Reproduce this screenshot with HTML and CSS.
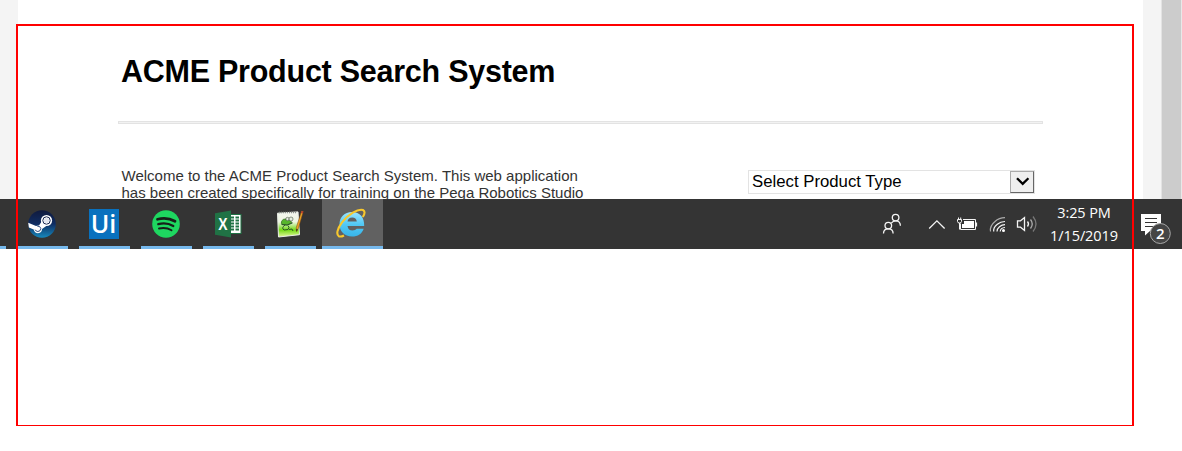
FILE: index.html
```html
<!DOCTYPE html>
<html lang="en">
<head>
<meta charset="utf-8">
<title>ACME Product Search System</title>
<link rel="stylesheet" href="styles.css">
</head>
<body>
<div class="browser">
  <div class="gutter"></div>
  <main class="page">
    <h1 class="title">ACME Product Search System</h1>
    <div class="rule"></div>
    <div class="row">
      <p class="intro">Welcome to the ACME Product Search System. This web application<br>has been created specifically for training on the Pega Robotics Studio</p>
      <div class="select">
        <span class="select-text">Select Product Type</span>
        <span class="select-button"><svg width="24" height="22" viewBox="0 0 24 22"><path d="M7 7.300 12.700 12.900 18.400 7.300" fill="none" stroke="#000" stroke-width="2.300"/></svg></span>
      </div>
    </div>
  </main>
  <div class="gutter"></div>
  <div class="scrollbar"></div>
</div>
<div class="taskbar">
  <div class="apps">
    <div class="sliver"></div>
    <div class="app">
      <svg width="28" height="28" viewBox="0 0 28 28">
        <defs><linearGradient id="steam" x1="0" y1="0" x2="0" y2="1"><stop offset="0" stop-color="#101a3d"/><stop offset=".5" stop-color="#102d62"/><stop offset="1" stop-color="#1689bd"/></linearGradient></defs>
        <circle cx="14" cy="14" r="13.800" fill="url(#steam)"/>
        <path d="M.2 12.800 8 16q1.500-.8 3-.5L14 11l5 4.500-5 3.500q0 4-4 4.200-3.500-.2-4.300-3.700L.9 17.500Z" fill="#fff"/>
        <circle cx="18.500" cy="10.500" r="5.600" fill="#fff"/><circle cx="18.500" cy="10.500" r="3.700" fill="none" stroke="#17264f" stroke-width="1"/><circle cx="18.500" cy="10.500" r="2.700" fill="#e4e7ef"/>
        <path d="M9.300 16.200q3-.4 3.500 2.300-.2 3-3 3-1.800 0-2.600-1.800" fill="none" stroke="#1b3970" stroke-width=".9"/>
      </svg>
    </div>
    <div class="app"><div class="uipath">Ui</div></div>
    <div class="app">
      <svg width="28" height="28" viewBox="0 0 28 28"><circle cx="14" cy="14" r="13.800" fill="#1ed760"/><g fill="none" stroke="#171f19" stroke-linecap="round"><path d="M5.500 9.300q9.500-2.500 17.500 2" stroke-width="2.700"/><path d="M6.300 14.200q8-2.200 15 1.800" stroke-width="2.300"/><path d="M7 18.500q7-1.600 12.500 1.700" stroke-width="1.900"/></g></svg>
    </div>
    <div class="app">
      <svg width="28" height="28" viewBox="0 0 28 28"><path d="M15 4h12.500v20H15Z" fill="#207245"/><path d="M15 5h11.500v18H15Z" fill="#fff"/><path d="M17 7.500h3M17 10.500h3M17 13.500h3M17 16.500h3M17 19.500h3M21.500 7.500H25M21.500 10.500H25M21.500 13.500H25M21.500 16.500H25M21.500 19.500H25" stroke="#207245" stroke-width="2.200"/><path d="M1 3.200 17 .5v27L1 24.800Z" fill="#207245"/><text x="4.200" y="19.500" class="xl" textLength="9.300" lengthAdjust="spacingAndGlyphs">X</text></svg>
    </div>
    <div class="app">
      <svg width="28" height="28" viewBox="0 0 28 28">
        <defs><linearGradient id="leaf" x1="0" y1="0" x2="0" y2="1"><stop offset="0" stop-color="#f4f7f0"/><stop offset=".4" stop-color="#eef6e2"/><stop offset=".72" stop-color="#72d914"/><stop offset="1" stop-color="#e5f99e"/></linearGradient></defs>
        <path d="m1.500 3.200 20.500-1.300 1.500 22.800-21 2.300Z" fill="url(#leaf)" stroke="#e9eee6"/>
        <path d="M3 2.500h18" stroke="#8b918b" stroke-width="1.500" stroke-dasharray="1 1"/>
        <path d="M5.500 11.500q1-3 4.500-2.500 2.500 0 4 1.500l2 2q-4 3.500-9 2-2.500-.5-1.500-3Z" fill="#57b52c" stroke="#3b7529" stroke-width=".8"/>
        <circle cx="11.500" cy="9" r="1.700" fill="#e5eedf" stroke="#465244" stroke-width=".6"/><circle cx="15" cy="9" r="2" fill="#e5eedf" stroke="#465244" stroke-width=".6"/>
        <path d="M5.500 14.500q5 2 11-1.500M9 15q-4 3-1 5l4-.500q2-2 0-4M13 19.500l3-.500 1 2" fill="none" stroke="#234b22" stroke-width=".9"/>
        <path d="M27.300 1.600 22.500 18l-2 3.500-.200-4L25.500 1Z" fill="#eba325" stroke="#70411b" stroke-width=".5"/><path d="m25.500 1 1.800.6-.500 1.900-1.900-.6Z" fill="#b93f30"/><path d="m20.300 19 .2 2.500 1.400-2Z" fill="#282420"/>
      </svg>
    </div>
    <div class="app active">
      <svg width="30" height="30" viewBox="0 0 30 30">
        <defs><linearGradient id="ie" x1="0" y1="0" x2="0" y2="1"><stop offset="0" stop-color="#9be6ff"/><stop offset=".5" stop-color="#52c9f5"/><stop offset="1" stop-color="#38b4e8"/></linearGradient></defs>
        <path d="M16 4C24 4 28.500 9.500 28.200 18H11.500q.6 4.500 5 4.500 3 0 4.200-1.800h7C26 25.800 22 28.500 16 28.500 8.500 28.500 3.500 23.500 3.500 16.300S8.500 4 16 4ZM11.500 13.500h9.300q-.5-4-4.600-4-4 0-4.700 4Z" fill="url(#ie)"/>
        <path d="M26.800 9C29.200 5.500 29 3 27 2 22 .5 12 6.300 6 14.300 1 21 .2 26.500 2.700 28.200q2 1 5.300-.7" fill="none" stroke="#f8c82d" stroke-width="2.100"/>
      </svg>
    </div>
  </div>
  <div class="tray">
    <svg class="tray-icons" width="170" height="50" viewBox="870 199 170 50" fill="none" stroke="#f5f5f5" stroke-width="1.300">
      <circle cx="888.300" cy="225.600" r="3.300"/><path d="M883.500 233.500q0-4.700 4.800-4.700t4.800 4.700"/><circle cx="895.600" cy="217.600" r="3.300"/><path d="M891.300 223.200q1.700-2.400 4.300-2.400 4.800 0 4.800 5"/>
      <path d="m929.200 228.500 7.700-7.700 7.700 7.700"/>
      <path d="M963 219.500h12.500v10H960.500v-6" stroke-width="1"/><path d="M964 221h10v7h-12v-4h2Z" fill="#fff" stroke="none"/><path d="M976.500 222.500v4" stroke-width="1.200"/><path d="M957.500 219.500h4v2q0 1.500-2 1.500t-2-1.500ZM958.500 217.500v2M960.700 217.500v2M959.500 223v6.500" stroke-width="1"/>
      <g stroke-width="1.200"><path d="M990.500 231.500q-1-5.500 4.500-10 4-3.800 10-3.800" stroke="#aaa"/><path d="M993.700 231.500q-.5-4 3.300-7 3.500-3 8-3"/><path d="M997 231.500q0-2.800 2.500-4.800t5.500-2"/><circle cx="1003.500" cy="230.500" r="1.500" fill="#fff" stroke="none"/><path d="M1000.200 231.500q.3-3.700 4.800-4"/></g>
      <path d="M1017.500 220.800h3l4-3.200v12.800l-4-3.200h-3Z"/><path d="M1027.500 221.500q2 2.500 0 5"/><path d="M1030.500 219.500q3.500 4.500 0 9" stroke="#aaa"/><path d="M1033 216.500q6 7.500 0 15" stroke="#777"/>
    </svg>
    <div class="clock"><span>3:25 PM</span><span>1/15/2019</span></div>
    <svg class="notice" width="36" height="50" viewBox="1136 199 36 50">
      <path d="M1141 214h20v17h-11l-5 4.500V231h-4Z" fill="#fff"/><path d="M1145 218.500h12M1145 222.500h12M1145 226.500h9" stroke="#333"/>
      <circle cx="1160.300" cy="233.500" r="10" fill="#454545" stroke="#a8a8a8"/><text x="1160.300" y="239" text-anchor="middle" class="count">2</text>
    </svg>
  </div>
</div>
<div class="frame"></div>
</body>
</html>
```
FILE: styles.css
```css
* { box-sizing: border-box; }
body { margin: 0; height: 451px; overflow: hidden; background: #fff; font-family: "Liberation Sans", Arial, sans-serif; }
svg { display: block; }
.browser { display: grid; grid-template-columns: 18px 1125px 18px 21px; height: 199px; overflow: hidden; }
.gutter { background: #f4f4f4; }
.scrollbar { background: #ccc; border-left: 1px solid #e3e3e3; border-right: 1px solid #e8e8e8; }
.page { padding: 53px 100px 0; }
.title { margin: 0 0 0 3px; font-size: 30.500px; letter-spacing: -.25px; line-height: 36px; height: 68px; color: #000; white-space: nowrap; }
.rule { height: 3px; border: 1px solid #e3e3e3; background: #f2f2f2; }
.row { display: flex; justify-content: space-between; padding: 43px 8px 0 3.500px; }
.intro { margin: 0; font-size: 15px; line-height: 17px; color: #333; white-space: nowrap; }
.select { display: flex; justify-content: space-between; width: 287px; height: 24px; margin-top: 3px; border: 1px solid #e3e3e3; }
.select-text { padding-left: 3px; font-size: 16.750px; line-height: 21px; color: #000; }
.select-button { width: 24px; height: 22px; background: #efefef; border: 1px solid #aaa; border-right-color: #666; border-bottom-color: #666; }
.select-button svg { margin: -1px; }
.taskbar { display: flex; justify-content: space-between; height: 50px; background: #343434; }
.apps { display: flex; gap: 11px; }
.sliver { width: 6px; border-bottom: 3px solid #76b9ed; }
.app { display: flex; align-items: center; justify-content: center; width: 51px; height: 50px; padding: 3px 2px 0 0; border-bottom: 3px solid #76b9ed; }
.app.active { width: 61px; margin-left: -5px; padding: 0 3px 0 0; background: #616161; }
.uipath { width: 30px; height: 30px; background: #0971be; color: #fff; font: 600 25px/28px "Open Sans", sans-serif; text-align: center; }
.xl { font: bold 16px "Liberation Sans", Arial, sans-serif; fill: #fff; }
.tray { display: flex; width: 312px; }
.clock { display: flex; flex-direction: column; align-items: center; width: 88px; padding-top: 2px; color: #fff; font: 14.500px/23px "Open Sans", sans-serif; letter-spacing: -.1px; white-space: nowrap; }
.notice { margin-left: 8px; }
.count { font: 600 15px "Open Sans", sans-serif; fill: #fff; }
.frame { position: absolute; left: 16px; top: 24px; width: 1118px; height: 402px; border: 2px solid #f00; border-bottom-width: 1px; }
```
